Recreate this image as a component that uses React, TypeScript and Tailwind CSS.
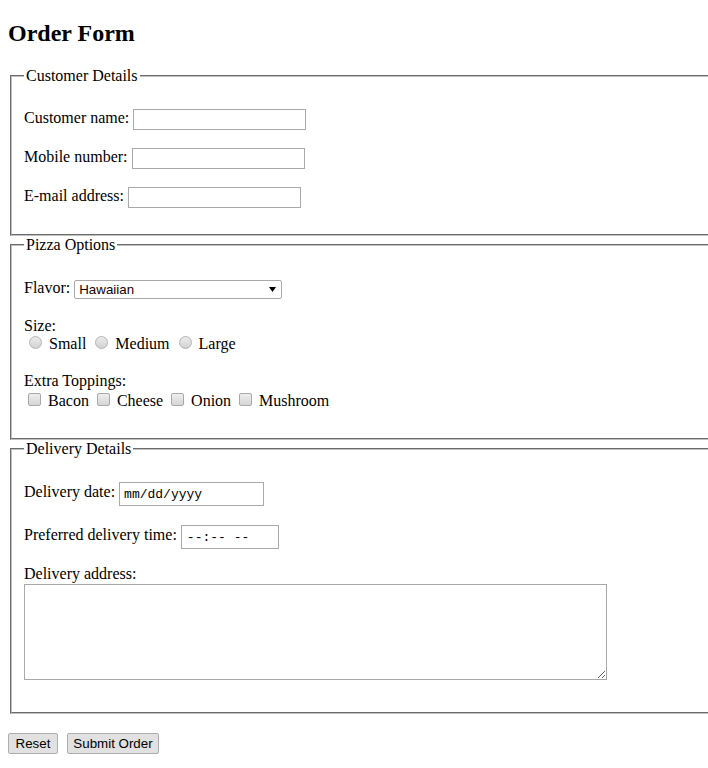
import React from "react";

const sans = "font-['Liberation_Sans',Arial,sans-serif] text-[13.33px]";
const mono = "font-['Liberation_Mono','Courier_New',monospace] text-[13px]";

const fieldsetCls =
  "mx-[2px] w-[760px] border-2 [border-style:groove] border-[#c0c0c0] pt-[5.6px] px-[12px]";

const boxInput = "border border-[#a9a9a9] bg-white";

function Radio({ name }: { name: string }) {
  return (
    <input
      type="radio"
      name={name}
      className="appearance-none inline-block w-[13px] h-[13px] ml-[5px] mr-[3px] mt-[1px] rounded-full border border-[#b4b4b4] bg-linear-to-b from-[#ebebeb] to-[#d2d2d2] align-baseline"
    />
  );
}

function Check() {
  return (
    <input
      type="checkbox"
      className="appearance-none inline-block w-[13px] h-[13px] ml-[4px] mr-[3px] mt-[3px] rounded-[2px] border border-[#a9a9a9] bg-linear-to-b from-[#ededed] to-[#d6d6d6] align-baseline"
    />
  );
}

export default function App() {
  return (
    <div className="w-full overflow-hidden bg-white text-black font-['Liberation_Serif','Times_New_Roman',serif] text-[16px] leading-[normal]">
      <div className="px-[8px] pb-[8px]">
        <h2 className="mt-[20px] mb-[20px] text-[24px] font-bold leading-[normal]">Order Form</h2>

        <form>
          <fieldset className={`${fieldsetCls} pb-[10.7px]`}>
            <legend className="px-[2px]">Customer Details</legend>
            <label className="my-4 flex h-[23px] items-start">
              <span className="mt-[2px]">Customer name:</span>
              <input type="text" className={`ml-[4px] mt-[2px] w-[173px] h-[21px] px-[2px] ${boxInput} ${sans}`} />
            </label>
            <label className="my-4 flex h-[23px] items-start">
              <span className="mt-[2px]">Mobile number:</span>
              <input type="tel" className={`ml-[4px] mt-[2px] w-[173px] h-[21px] px-[2px] ${boxInput} ${sans}`} />
            </label>
            <label className="my-4 flex h-[23px] items-start">
              <span className="mt-[2px]">E-mail address:</span>
              <input type="email" className={`ml-[4px] mt-[2px] w-[173px] h-[21px] px-[2px] ${boxInput} ${sans}`} />
            </label>
          </fieldset>

          <fieldset className={`${fieldsetCls} pb-[11.5px]`}>
            <legend className="px-[2px]">Pizza Options</legend>
            <label className="my-4 flex h-[25px] items-start">
              <span className="mt-[3px]">Flavor:</span>
              <span className="relative ml-[4px] mt-[4px]">
                <select className={`appearance-none block w-[208px] h-[19px] pl-[4px] rounded-[2px] ${boxInput} text-[#1a0000] ${sans}`}>
                  <option>Hawaiian</option>
                  <option>Pepperoni</option>
                  <option>Margherita</option>
                </select>
                <svg className="pointer-events-none absolute right-[6px] top-[7px]" width="7" height="5" viewBox="0 0 7 5">
                  <path d="M0 0h7L3.5 5z" fill="#000" />
                </svg>
              </span>
            </label>
            <div className="my-4">
              <div className="h-[18.4px]">Size:</div>
              <div className="h-[20.6px]">
                <label>
                  <Radio name="size" /> Small
                </label>{" "}
                <label>
                  <Radio name="size" /> Medium
                </label>{" "}
                <label>
                  <Radio name="size" /> Large
                </label>
              </div>
            </div>
            <div className="my-4">
              <div className="h-[18.4px]">Extra Toppings:</div>
              <div className="h-[20.6px]">
                <label>
                  <Check /> Bacon
                </label>{" "}
                <label>
                  <Check /> Cheese
                </label>{" "}
                <label>
                  <Check /> Onion
                </label>{" "}
                <label>
                  <Check /> Mushroom
                </label>
              </div>
            </div>
          </fieldset>

          <fieldset className={`${fieldsetCls} pb-[10px]`}>
            <legend className="px-[2px]">Delivery Details</legend>
            <label className="my-4 flex h-[26px] items-start">
              <span className="mt-[3px]">Delivery date:</span>
              <input
                type="text"
                readOnly
                defaultValue="mm/dd/yyyy"
                className={`ml-[4px] mt-[2.5px] w-[145px] h-[23.5px] px-[4px] ${boxInput} ${mono}`}
              />
            </label>
            <label className="mt-[17px] mb-4 flex h-[26px] items-start">
              <span className="mt-[3px]">Preferred delivery time:</span>
              <input
                type="text"
                readOnly
                defaultValue="--:-- --"
                className={`ml-[4px] mt-[2.5px] w-[98px] h-[23.5px] px-[5px] ${boxInput} ${mono}`}
              />
            </label>
            <label className="my-4 block pb-[5.3px]">
              <span className="block h-[19.5px]">Delivery address:</span>
              <textarea className={`block w-[583px] h-[96px] ${boxInput} ${sans}`} />
            </label>
          </fieldset>

          <div className="mt-[19px] flex gap-[9px]">
            <button type="reset" className={`w-[50px] h-[21px] border border-[#adadad] rounded-[2px] bg-[#e1e1e1] ${sans}`}>
              Reset
            </button>
            <button type="submit" className={`w-[92px] h-[21px] border border-[#adadad] rounded-[2px] bg-[#e1e1e1] ${sans}`}>
              Submit Order
            </button>
          </div>
        </form>
      </div>
    </div>
  );
}
